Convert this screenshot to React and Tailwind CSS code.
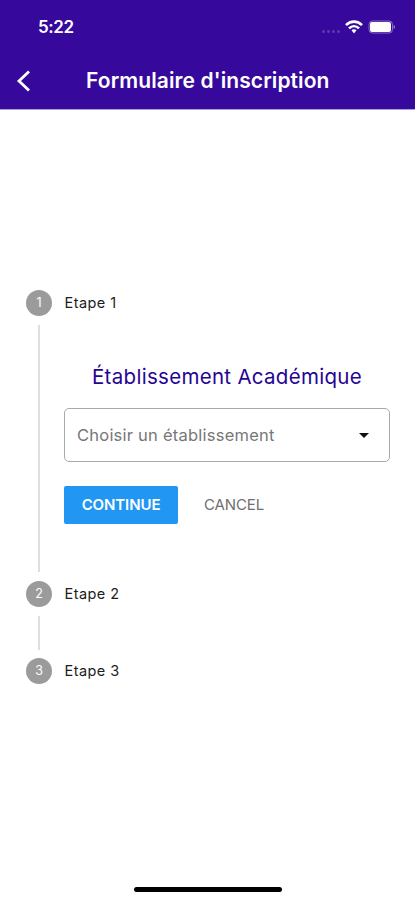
import React from 'react';

function StatusBar() {
  return (
    <div className="flex h-[53px] items-center justify-between pl-[38px] pr-[19px] pt-px">
      <span className="text-[17px] font-semibold leading-5 tracking-[-0.4px]">5:22</span>
      <div className="flex items-center">
        <div className="mr-[5px] mt-[8px] flex gap-[2px]">
          {[0, 1, 2, 3].map((i) => (
            <span key={i} className="size-[3px] rounded-full bg-white/20" />
          ))}
        </div>
        <svg width="18" height="14" viewBox="0 0 18 14" fill="none" stroke="white" strokeWidth="2.6">
          <path d="M1 5.1C5.5 .5 12.5 .5 17 5.1" />
          <path d="M4 8.4C6.9 5.5 11.1 5.5 14 8.4" />
          <path d="M9 9.2c-1.1 0-1.9.4-2.5 1L9 13.5l2.5-3.3c-.6-.6-1.4-1-2.5-1Z" fill="white" stroke="none" />
        </svg>
        <svg className="ml-[5px]" width="28" height="14" viewBox="0 0 28 14">
          <rect x="1" y="1" width="23.5" height="12" rx="3.5" fill="none" stroke="white" strokeOpacity=".4" />
          <rect x="2" y="2" width="21" height="10" rx="2" fill="white" />
          <path d="M25.6 5v4c.9-.4 1.3-1.1 1.3-2s-.4-1.6-1.3-2Z" fill="white" fillOpacity=".5" />
        </svg>
      </div>
    </div>
  );
}

function StepHeader({ number }) {
  return (
    <div className="flex h-[26px] items-center">
      <span className="flex size-[26px] items-center justify-center rounded-full bg-[#9b9b9b] text-[12.5px] text-white">
        {number}
      </span>
      <span className="ml-[12.5px] text-[14.5px] tracking-[0.45px] text-[#1c1c1c]">Etape {number}</span>
    </div>
  );
}

export default function App() {
  return (
    <div className="flex h-[900px] w-[415px] flex-col bg-white font-['Inter',sans-serif]">
      <header className="h-[109px] bg-[#36099c] text-white shadow-[0_1px_0_#a9a0dc]">
        <StatusBar />
        <div className="flex h-[55px] items-center">
          <svg className="ml-[15px]" width="16" height="24" viewBox="0 0 16 24" fill="none" stroke="white" strokeWidth="2.8">
            <path d="M14 2.5 4 12l10 9.5" />
          </svg>
          <h1 className="ml-[55px] whitespace-nowrap text-[21px] font-semibold leading-6 tracking-[0.1px]">Formulaire d'inscription</h1>
        </div>
      </header>

      <main className="flex-1 pl-[26px] pr-[25px] pt-[181px]">
        <StepHeader number={1} />
        <div className="my-[9px] ml-[12px] h-[247px] border-l-2 border-[#dedede] pl-[24px]">
          <h2 className="whitespace-nowrap pt-[39px] text-center text-[20.5px] leading-[26px] tracking-[0.3px] text-[#260593]">
            Établissement Académique
          </h2>
          <div className="mt-[18px] flex h-[54px] items-center justify-between rounded-[5px] border border-[#aaa] pl-[12px] pr-[20px]">
            <span className="text-[16.5px] tracking-[0.23px] text-[#777]">Choisir un établissement</span>
            <svg width="10" height="5" viewBox="0 0 10 5"><path d="M0 0h10L5 5Z" fill="#111" /></svg>
          </div>
          <div className="mt-[24px] flex h-[38px] items-center">
            <button className="h-[38px] w-[114px] rounded-[2px] bg-[#2196f3] text-[15px] font-semibold tracking-[-0.1px] text-white">CONTINUE</button>
            <button className="ml-[26px] text-[15px] tracking-[-0.1px] text-[#707070]">CANCEL</button>
          </div>
        </div>
        <StepHeader number={2} />
        <div className="mb-[8px] mt-[9px] ml-[12px] h-[34px] border-l-2 border-[#dedede]" />
        <StepHeader number={3} />
      </main>

      <div className="mx-auto mb-[8px] h-[5px] w-[148px] rounded-full bg-black" />
    </div>
  );
}
